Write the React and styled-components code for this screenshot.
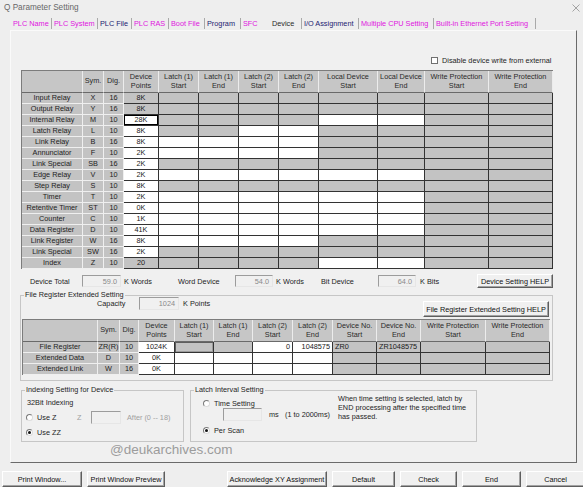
import React from 'react';
import styled, { createGlobalStyle } from 'styled-components';

const Global = createGlobalStyle`
  html, body { margin: 0; padding: 0; background: #eeeeee; }
  body { font-family: "Liberation Sans", Arial, sans-serif; }
  *, *::before, *::after { box-sizing: border-box; }
`;

const Window = styled.div`
  width: 583px;
  height: 487px;
  overflow: hidden;
  display: flex;
  flex-direction: column;
  background: #eeeeee;
  font-family: "Liberation Sans", Arial, sans-serif;
  font-size: 7.3px;
  color: #1e1e1e;
`;

const TitleBar = styled.div`
  height: 16px;
  flex: none;
  display: flex;
  align-items: center;
  justify-content: space-between;
  padding: 0 3px 1px 4px;
  font-size: 8.2px;
  color: #676767;
`;

const TabStrip = styled.div`
  height: 14px;
  flex: none;
  display: flex;
  align-items: center;
  padding-left: 12px;
`;

const Tab = styled.div`
  width: ${(p) => p.$w}px;
  height: 11px;
  flex: none;
  display: flex;
  align-items: center;
  padding-left: ${(p) => (p.$pl ?? 2)}px;
  border-left: ${(p) => (p.$bar ? '1px solid #a9a9a9' : 'none')};
  color: ${(p) => p.$c};
  white-space: nowrap;
`;

const TabEnd = styled.div`
  width: 1px;
  height: 11px;
  background: #a9a9a9;
`;

const Panel = styled.div`
  margin-left: 10px;
  width: 567px;
  height: 433px;
  flex: none;
  background: #f0f0f0;
  border-top: 1px solid #fafafa;
  border-left: 1px solid #fafafa;
  border-right: 1px solid #6a6a6a;
  border-bottom: 1px solid #6a6a6a;
  padding-left: 10px;
  display: flex;
  flex-direction: column;
`;

const CheckRow = styled.div`
  margin-top: 25px;
  height: 8px;
  display: flex;
  align-items: center;
  gap: 4px;
  padding-left: 410px;
  white-space: nowrap;
`;

const CheckBox = styled.span`
  width: 7px;
  height: 7px;
  flex: none;
  background: #fff;
  border: 1px solid #707070;
`;

const Grid = styled.div`
  display: grid;
  grid-template-columns: ${(p) => p.$cols};
  grid-template-rows: 22px repeat(${(p) => p.$rows}, 11px);
  width: fit-content;
  margin-top: ${(p) => p.$mt || 0}px;
  margin-left: ${(p) => p.$ml || 0}px;
  border-top: 1px solid #7c7c7c;
  border-left: 1px solid #7c7c7c;
`;

const HeadCell = styled.div`
  display: flex;
  align-items: center;
  justify-content: center;
  text-align: center;
  white-space: pre-line;
  line-height: 8.6px;
  background: #c6c6c6;
  color: #2a2a2a;
  border-right: 1px solid #ececec;
  border-bottom: 1px solid #6a6a6a;
  overflow: hidden;
`;

const RowHead = styled.div`
  display: flex;
  align-items: center;
  justify-content: center;
  white-space: nowrap;
  line-height: 1;
  background: #c3c3c3;
  color: #222;
  border-right: 1px solid #efefef;
  border-bottom: 1px solid #efefef;
  overflow: hidden;
`;

const DataCell = styled.div`
  display: flex;
  align-items: center;
  justify-content: ${(p) => p.$align || 'center'};
  padding: 0 2px;
  white-space: nowrap;
  line-height: 1;
  background: ${(p) => (p.$white ? '#ffffff' : '#c3c3c3')};
  color: #1a1a1a;
  border-right: 1px solid #333;
  border-bottom: 1px solid #333;
  box-shadow: ${(p) =>
    p.$focus
      ? 'inset 0 0 0 1px #000'
      : p.$sunken
      ? 'inset 1px 1px 0 #5e5e5e, inset -1px -1px 0 #9c9c9c'
      : 'none'};
  overflow: hidden;
`;

const Row = styled.div`
  display: flex;
  align-items: ${(p) => p.$items || 'center'};
  height: ${(p) => p.$h}px;
  margin-top: ${(p) => p.$mt || 0}px;
  padding-left: ${(p) => p.$pl || 0}px;
  flex: none;
  white-space: nowrap;
`;

const Slot = styled.div`
  width: ${(p) => p.$w}px;
  flex: none;
  padding-left: ${(p) => p.$pl || 0}px;
  color: ${(p) => p.$c || 'inherit'};
  white-space: nowrap;
`;

const ValueBox = styled.div`
  width: ${(p) => p.$w}px;
  height: ${(p) => p.$h || 12}px;
  flex: none;
  display: flex;
  align-items: center;
  justify-content: flex-end;
  padding-right: 3px;
  background: #f0f0f0;
  color: #8a8a8a;
  border: 1px solid;
  border-color: #9c9c9c #e6e6e6 #e6e6e6 #9c9c9c;
`;

const Button = styled.button`
  width: ${(p) => p.$w}px;
  height: ${(p) => p.$h || 16}px;
  flex: none;
  margin: ${(p) => p.$m || '0'};
  padding: 0;
  display: flex;
  align-items: center;
  justify-content: center;
  font: inherit;
  color: #111;
  background: #f0f0f0;
  border: 1px solid;
  border-color: #ffffff #5e5e5e #5e5e5e #ffffff;
  box-shadow: inset -1px -1px 0 #a3a3a3;
  white-space: nowrap;
`;

const Group = styled.fieldset`
  margin: ${(p) => p.$m || '0'};
  padding: 0 0 ${(p) => p.$pb || 0}px 0;
  width: ${(p) => p.$w}px;
  height: ${(p) => (p.$h ? `${p.$h}px` : 'auto')};
  min-width: 0;
  flex: none;
  border: 1px solid #c6c6c6;
  display: ${(p) => (p.$flex ? 'flex' : 'block')};
`;

const Legend = styled.legend`
  margin-left: 3px;
  padding: 0 1px;
  line-height: 8px;
  font-size: 7.3px;
  color: #1e1e1e;
`;

const Column = styled.div`
  width: ${(p) => (p.$w ? `${p.$w}px` : 'auto')};
  flex: ${(p) => (p.$w ? 'none' : '1')};
  display: flex;
  flex-direction: column;
  padding-top: ${(p) => p.$pt || 0}px;
`;

const GroupsRow = styled.div`
  display: flex;
  gap: 6px;
  margin-top: 5px;
`;

const Radio = styled.span`
  width: 7px;
  height: 7px;
  flex: none;
  border-radius: 50%;
  background: #fff;
  border: 1px solid;
  border-color: #7a7a7a #dcdcdc #dcdcdc #7a7a7a;
  display: inline-flex;
  align-items: center;
  justify-content: center;
  margin-right: 4px;
  &::after {
    content: '';
    width: 3px;
    height: 3px;
    border-radius: 50%;
    background: ${(p) => (p.$on ? '#111' : 'transparent')};
  }
`;

const Desc = styled.div`
  line-height: 9px;
  color: #1e1e1e;
`;

const Watermark = styled.div`
  margin-top: 1px;
  padding-left: 89px;
  height: 13px;
  font-size: 13.5px;
  line-height: 13px;
  color: #9c9c9c;
`;

const ButtonBar = styled.div`
  margin-top: 8px;
  height: 16px;
  flex: none;
  display: flex;
  gap: 5px;
  padding-left: 2px;
`;

const Spacer = styled.div`
  width: ${(p) => p.$w}px;
  flex: none;
`;

const MAG = '#e014e0';
const NAVY = '#222270';

const TABS = [
  { label: 'PLC Name', w: 39, bar: false, pl: 1, c: MAG },
  { label: 'PLC System', w: 46, bar: true, c: MAG },
  { label: 'PLC File', w: 34, bar: true, c: NAVY },
  { label: 'PLC RAS', w: 37, bar: true, c: MAG },
  { label: 'Boot File', w: 36, bar: true, c: MAG },
  { label: 'Program', w: 36, bar: true, c: NAVY },
  { label: 'SFC', w: 24, bar: true, c: MAG },
  { label: 'Device', w: 37, bar: false, pl: 8, c: '#2a2a2a' },
  { label: 'I/O Assignment', w: 57, bar: true, c: NAVY },
  { label: 'Multiple CPU Setting', w: 75, bar: true, c: MAG },
  { label: 'Built-in Ethernet Port Setting', w: 102, bar: true, c: MAG },
];

const T1_COLS = '61px 21px 20px 35px 40px 40px 40px 40px 59px 47px 64px 64px';
const T1_HEAD = [
  '', 'Sym.', 'Dig.', 'Device\nPoints', 'Latch (1)\nStart', 'Latch (1)\nEnd',
  'Latch (2)\nStart', 'Latch (2)\nEnd', 'Local Device\nStart', 'Local Device\nEnd',
  'Write Protection\nStart', 'Write Protection\nEnd',
];
// name, sym, dig, points, pointsWhite, latch1White, latch2White, localWhite, focus
const T1_ROWS = [
  ['Input Relay', 'X', '16', '8K', 0, 0, 0, 0],
  ['Output Relay', 'Y', '16', '8K', 0, 0, 0, 0],
  ['Internal Relay', 'M', '10', '28K', 1, 0, 0, 1, 1],
  ['Latch Relay', 'L', '10', '8K', 1, 0, 1, 0],
  ['Link Relay', 'B', '16', '8K', 1, 1, 1, 0],
  ['Annunciator', 'F', '10', '2K', 1, 1, 1, 0],
  ['Link Special', 'SB', '16', '2K', 1, 0, 0, 0],
  ['Edge Relay', 'V', '10', '2K', 1, 1, 1, 1],
  ['Step Relay', 'S', '10', '8K', 1, 0, 0, 0],
  ['Timer', 'T', '10', '2K', 1, 1, 1, 1],
  ['Retentive Timer', 'ST', '10', '0K', 1, 1, 1, 1],
  ['Counter', 'C', '10', '1K', 1, 1, 1, 1],
  ['Data Register', 'D', '10', '41K', 1, 1, 1, 1],
  ['Link Register', 'W', '16', '8K', 1, 1, 1, 0],
  ['Link Special', 'SW', '16', '2K', 1, 0, 0, 0],
  ['Index', 'Z', '10', '20', 0, 0, 0, 1],
];

const T2_COLS = '75px 22px 19px 36px 39px 39px 40px 40px 44px 44px 65px 64px';
const T2_HEAD = [
  '', 'Sym.', 'Dig.', 'Device\nPoints', 'Latch (1)\nStart', 'Latch (1)\nEnd',
  'Latch (2)\nStart', 'Latch (2)\nEnd', 'Device No.\nStart', 'Device No.\nEnd',
  'Write Protection\nStart', 'Write Protection\nEnd',
];

function CloseIcon() {
  return (
    <svg width="8" height="8" viewBox="0 0 8 8">
      <path d="M0.5 0.5 L7.5 7.5 M7.5 0.5 L0.5 7.5" stroke="#9a9a9a" strokeWidth="0.9" fill="none" />
    </svg>
  );
}

function DeviceTable() {
  return (
    <Grid $cols={T1_COLS} $rows={16} $mt={6}>
      {T1_HEAD.map((h, i) => (
        <HeadCell key={`h${i}`}>{h}</HeadCell>
      ))}
      {T1_ROWS.map((r, ri) => {
        const [name, sym, dig, pts, pw, l1, l2, loc, focus] = r;
        return (
          <React.Fragment key={ri}>
            <RowHead>{name}</RowHead>
            <RowHead>{sym}</RowHead>
            <RowHead>{dig}</RowHead>
            <DataCell $white={!!pw} $focus={!!focus}>{pts}</DataCell>
            <DataCell $white={!!l1} />
            <DataCell $white={!!l1} />
            <DataCell $white={!!l2} />
            <DataCell $white={!!l2} />
            <DataCell $white={!!loc} />
            <DataCell $white={!!loc} />
            <DataCell />
            <DataCell />
          </React.Fragment>
        );
      })}
    </Grid>
  );
}

function FileRegisterTable() {
  const ext = [
    ['Extended Data', 'D', '10', '0K'],
    ['Extended Link', 'W', '16', '0K'],
  ];
  return (
    <Grid $cols={T2_COLS} $rows={3} $mt={2} $ml={1}>
      {T2_HEAD.map((h, i) => (
        <HeadCell key={`h${i}`}>{h}</HeadCell>
      ))}
      <RowHead>File Register</RowHead>
      <RowHead>ZR(R)</RowHead>
      <RowHead>10</RowHead>
      <DataCell $white>1024K</DataCell>
      <DataCell $sunken />
      <DataCell />
      <DataCell $white $align="flex-end">0</DataCell>
      <DataCell $white $align="flex-end">1048575</DataCell>
      <DataCell $align="flex-start">ZR0</DataCell>
      <DataCell $align="flex-start">ZR1048575</DataCell>
      <DataCell />
      <DataCell />
      {ext.map(([n, s, d, p]) => (
        <React.Fragment key={n}>
          <RowHead>{n}</RowHead>
          <RowHead>{s}</RowHead>
          <RowHead>{d}</RowHead>
          <DataCell $white>{p}</DataCell>
          <DataCell $white />
          <DataCell $white />
          <DataCell $white />
          <DataCell $white />
          <DataCell />
          <DataCell />
          <DataCell />
          <DataCell />
        </React.Fragment>
      ))}
    </Grid>
  );
}

export default function App() {
  return (
    <>
      <Global />
      <Window>
        <TitleBar>
          <span>Q Parameter Setting</span>
          <CloseIcon />
        </TitleBar>
        <TabStrip>
          {TABS.map((t) => (
            <Tab key={t.label} $w={t.w} $bar={t.bar} $pl={t.pl} $c={t.c}>
              {t.label}
            </Tab>
          ))}
          <TabEnd />
        </TabStrip>
        <Panel>
          <CheckRow>
            <CheckBox />
            <span>Disable device write from external</span>
          </CheckRow>

          <DeviceTable />

          <Row $h={14} $mt={5}>
            <Slot $w={61} $pl={9}>Device Total</Slot>
            <ValueBox $w={39}>59.0</ValueBox>
            <Slot $w={57} $pl={3}>K Words</Slot>
            <Slot $w={57}>Word Device</Slot>
            <ValueBox $w={38}>54.0</ValueBox>
            <Slot $w={48} $pl={3}>K Words</Slot>
            <Slot $w={57}>Bit Device</Slot>
            <ValueBox $w={38}>64.0</ValueBox>
            <Slot $w={61} $pl={4}>K Bits</Slot>
            <Button $w={76} $h={14}>Device Setting HELP</Button>
          </Row>

          <Group $m="3px 0 0 -1px" $w={533} $pb={5}>
            <Legend>File Register Extended Setting</Legend>
            <Row $h={20} $mt={-2} $items="flex-start">
              <Row $h={13} $pl={76}>
                <Slot $w={42}>Capacity</Slot>
                <ValueBox $w={40} $h={13}>1024</ValueBox>
                <Slot $w={40} $pl={4}>K Points</Slot>
              </Row>
              <Button $w={126} $h={16} $m="4px 3px 0 auto">File Register Extended Setting HELP</Button>
            </Row>
            <FileRegisterTable />
          </Group>

          <GroupsRow>
            <Group $w={163} $h={56}>
              <Legend>Indexing Setting for Device</Legend>
              <Row $h={8} $mt={4} $pl={5}>32Bit Indexing</Row>
              <Row $h={13} $mt={5} $pl={4}>
                <Radio />
                <Slot $w={40}>Use Z</Slot>
                <Slot $w={14} $c="#a0a0a0">Z</Slot>
                <ValueBox $w={30} $h={13} />
                <Slot $w={50} $pl={6} $c="#a0a0a0">After (0 -- 18)</Slot>
              </Row>
              <Row $h={8} $mt={4} $pl={4}>
                <Radio $on />
                <span>Use ZZ</span>
              </Row>
            </Group>
            <Group $w={287} $h={56} $flex>
              <Legend>Latch Interval Setting</Legend>
              <Column $w={147}>
                <Row $h={8} $mt={5} $pl={12}>
                  <Radio />
                  <span>Time Setting</span>
                </Row>
                <Row $h={13} $mt={1} $pl={32}>
                  <ValueBox $w={39} $h={13} />
                  <Slot $w={23} $pl={7}>ms</Slot>
                  <span>(1 to 2000ms)</span>
                </Row>
                <Row $h={8} $mt={5} $pl={12}>
                  <Radio $on />
                  <span>Per Scan</span>
                </Row>
              </Column>
              <Column>
                <Desc>
                  When time setting is selected, latch by
                  <br />
                  END processing after the specified time
                  <br />
                  has passed.
                </Desc>
              </Column>
            </Group>
          </GroupsRow>

          <Watermark>@deukarchives.com</Watermark>
        </Panel>

        <ButtonBar>
          <Button $w={80}>Print Window...</Button>
          <Button $w={78}>Print Window Preview</Button>
          <Spacer $w={52} />
          <Button $w={100}>Acknowledge XY Assignment</Button>
          <Button $w={63}>Default</Button>
          <Button $w={57}>Check</Button>
          <Button $w={59}>End</Button>
          <Button $w={59}>Cancel</Button>
        </ButtonBar>
      </Window>
    </>
  );
}
